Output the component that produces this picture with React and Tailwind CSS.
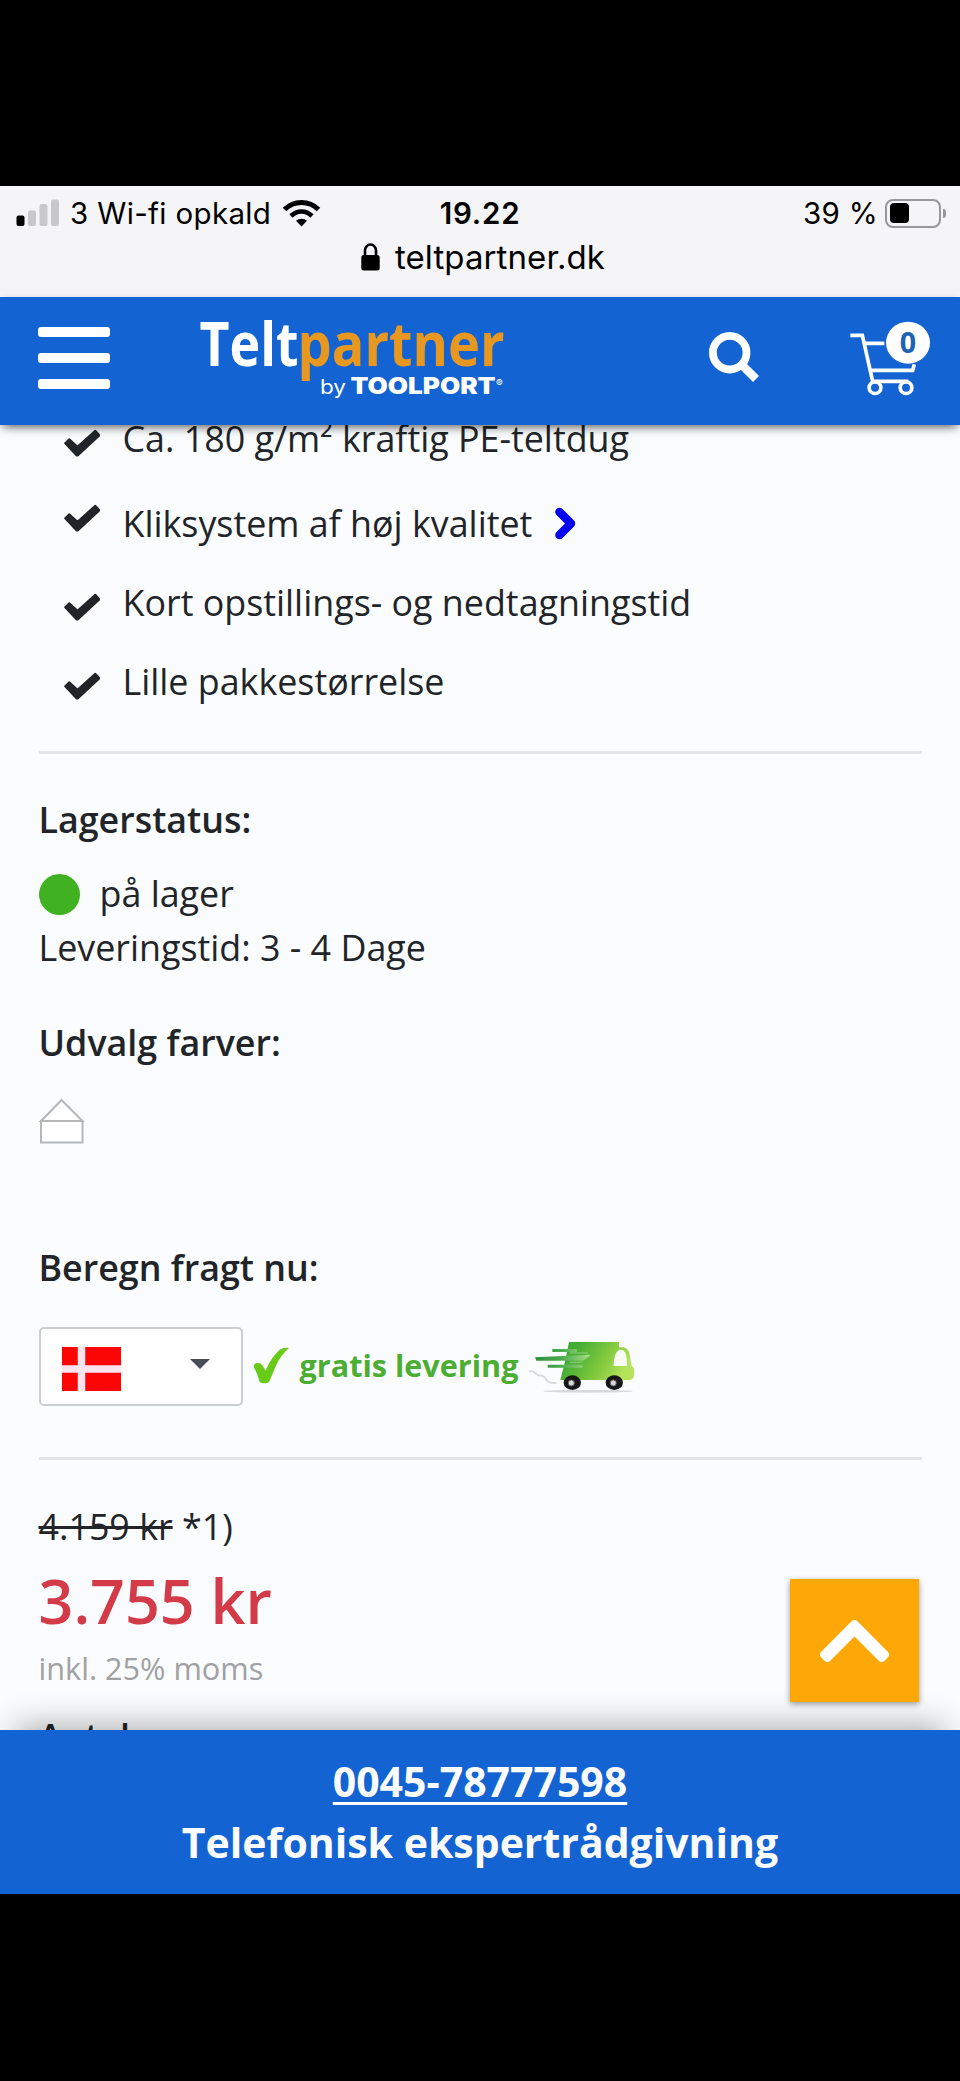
import React from "react";
import { FaChevronUp } from "react-icons/fa";

function StatusBar() {
  return (
    <div className="h-[111px] bg-[#f5f5f7] pt-[7px] font-['Inter',sans-serif] text-black">
      <div className="grid h-10 grid-cols-[1fr_auto_1fr] items-center">
        <div className="flex items-center pl-4">
          <svg width="44" height="28" viewBox="0 0 44 28">
            <rect x="0.5" y="16.5" width="8" height="10.5" rx="2" fill="#000" />
            <rect x="12" y="11.5" width="8" height="15.5" rx="2" fill="#c8c8ca" />
            <rect x="23.5" y="5" width="8" height="22" rx="2" fill="#c8c8ca" />
            <rect x="35" y="0.5" width="8" height="26.5" rx="2" fill="#c8c8ca" />
          </svg>
          <span className="ml-[10px] text-[29.5px] leading-10 tracking-[0.35px] whitespace-nowrap">3 Wi-fi opkald</span>
          <svg className="ml-[11px]" width="39" height="28" viewBox="0 0 39 28" fill="none" stroke="#000">
            <path d="M2.500 10.500 C12 1 27 1 36.500 10.500" strokeWidth="5" />
            <path d="M9 17 C15 11 24 11 30 17" strokeWidth="4.600" />
            <path d="M19.500 27.500 L14 21.800 C17 18.900 22 18.900 25 21.800 Z" fill="#000" stroke="none" />
          </svg>
        </div>
        <span className="text-[29.5px] leading-10 font-semibold tracking-[0.8px]">19.22</span>
        <div className="flex items-center justify-end pr-[14px]">
          <span className="mr-[7px] text-[29.5px] leading-10 tracking-[0.3px]">39 %</span>
          <div className="flex h-[29px] w-[56px] items-center rounded-[8px] border-2 border-[#98989a] pl-[3px]">
            <div className="h-5 w-[19px] rounded-[4px] bg-black" />
          </div>
          <div className="ml-[2px] h-[9px] w-[3px] rounded-r-full bg-[#98989a]" />
        </div>
      </div>
      <div className="mt-1 flex h-10 items-center justify-center pl-[6px]">
        <svg width="19" height="28" viewBox="0 0 19 28">
          <path d="M4 13 V7.500 a5.500 6 0 0 1 11 0 V13" fill="none" stroke="#000" strokeWidth="2.600" />
          <rect x="0.300" y="12" width="18.400" height="15.500" rx="2.500" fill="#000" />
        </svg>
        <span className="ml-[15px] text-[33px] leading-10 tracking-[0.1px]">teltpartner.dk</span>
      </div>
    </div>
  );
}

function Logo() {
  return (
    <svg width="310" height="84" viewBox="0 0 310 84" className="ml-[88px] overflow-visible">
      <g fontFamily="'Open Sans', sans-serif" fontSize="60">
        <text x="1.500" y="48" fontWeight="700" textLength="99" lengthAdjust="spacingAndGlyphs" fill="#fff">Telt</text>
        <text x="99.500" y="48" fontWeight="700" textLength="207" lengthAdjust="spacingAndGlyphs" fill="#e8981f">partner</text>
      </g>
      <text x="122" y="75.500" fontFamily="Inter, sans-serif" fontSize="19.500" fill="#fff" textLength="26" lengthAdjust="spacingAndGlyphs">by</text>
      <text x="152.500" y="75.500" fontFamily="Inter, sans-serif" fontWeight="900" fontSize="22.500" fill="#fff" textLength="145" lengthAdjust="spacingAndGlyphs">TOOLPORT</text>
      <text x="298" y="69" fontFamily="Inter, sans-serif" fontSize="10" fill="#fff">®</text>
    </svg>
  );
}

function Header() {
  return (
    <header className="relative z-10 flex h-32 items-start bg-[#1463d2] pt-[21px] shadow-[0_4px_10px_-3px_rgba(0,0,0,0.75)]">
      <div className="mt-[9px] ml-[38px] flex w-[72px] flex-col gap-4">
        <div className="h-[10px] rounded-[3px] bg-white" />
        <div className="h-[10px] rounded-[3px] bg-white" />
        <div className="h-[10px] rounded-[3px] bg-white" />
      </div>
      <Logo />
      <svg className="mt-[13px] ml-[199px]" width="54" height="54" viewBox="0 0 54 54" fill="none" stroke="#fff">
        <circle cx="22.700" cy="21.700" r="16.800" strokeWidth="7.800" />
        <path d="M34.500 33.500 L49 48" strokeWidth="8.500" />
      </svg>
      <svg className="ml-[86px]" width="86.700" height="80" viewBox="1100 415 260 240" fill="none" stroke="#fff" strokeWidth="11">
        <path d="M1110 467 H1146 L1177 605 H1284" />
        <path d="M1153 491 H1212 M1170 572 H1297 L1302 554" />
        <circle cx="1184" cy="624" r="17.500" />
        <circle cx="1277" cy="624" r="17.500" />
        <ellipse cx="1283" cy="489" rx="66" ry="63" fill="#fff" stroke="none" />
        <text x="1283" y="519" textAnchor="middle" fontFamily="'Open Sans', sans-serif" fontWeight="700" fontSize="86" fill="#1c63b4" stroke="none">0</text>
      </svg>
    </header>
  );
}

function CheckMark({ className }) {
  return (
    <svg className={`h-9 w-9 shrink-0 ${className}`} viewBox="0 0 36 36">
      <path
        d="M1.200 18.300 L5.300 14.300 L13.500 21.700 L31.200 5.700 L35 9.800 L35 10.800 L13.700 30.600 L12.700 30.600 Z"
        fill="#212529"
        stroke="#212529"
        strokeWidth="2"
        strokeLinejoin="round"
      />
    </svg>
  );
}

function Feature({ children, row, icon }) {
  return (
    <li className={`flex items-start pl-[25px] ${row}`}>
      <CheckMark className={icon} />
      <span className="ml-[23px] flex items-center leading-[53px] whitespace-nowrap">{children}</span>
    </li>
  );
}

function Truck() {
  return (
    <svg className="ml-[10px] shrink-0" width="108.300" height="53.300" viewBox="865 65 325 160">
      <defs>
        <linearGradient id="body" x1="0" x2="1" y1="0" y2="0.300">
          <stop offset="0" stopColor="#3aa535" />
          <stop offset="0.250" stopColor="#45ad35" />
          <stop offset="0.700" stopColor="#86cb3e" />
          <stop offset="1" stopColor="#b4e35c" />
        </linearGradient>
        <linearGradient id="speed" x1="0" x2="1" y1="0" y2="0">
          <stop offset="0" stopColor="#2f8f3c" />
          <stop offset="0.450" stopColor="#46a84a" />
          <stop offset="1" stopColor="#a5dc82" />
        </linearGradient>
      </defs>
      <ellipse cx="1045" cy="219" rx="135" ry="4" fill="#d6d8da" />
      <path d="M868 160 q10 -4 18 4 t18 8 t16 12 t30 10" fill="none" stroke="#d9dadb" strokeWidth="6" />
      <path d="M988 71 H1138 V87 H1152 Q1166 90 1170 108 L1176 143 Q1185 148 1184 165 Q1184 185 1170 185 H962 L976 130 Z" fill="url(#body)" />
      <path d="M1122 143 Q1122 104 1138 95 Q1153 90 1159 108 Q1163 125 1162 143 Z" fill="#f8fcf5" />
      <path d="M938 92 H1012 V101 H938 Z M886 117 L1050 109 V114 L1030 127 H890 Z M924 139 H1028 V148 H924 Z" fill="url(#speed)" />
      <path d="M990 104 H1044 M990 132 H1028" stroke="#8fce86" strokeWidth="3" />
      <g fill="#171717">
        <ellipse cx="998" cy="193" rx="26" ry="22" />
        <ellipse cx="1124" cy="193" rx="26" ry="22" />
      </g>
      <g fill="#d9d9d9" stroke="#666" strokeWidth="3">
        <ellipse cx="995" cy="194" rx="9" ry="9" />
        <ellipse cx="1121" cy="194" rx="9" ry="9" />
      </g>
    </svg>
  );
}

export default function App() {
  return (
    <div className="flex h-[2081px] w-[960px] flex-col overflow-hidden bg-black pt-[186px] font-['Open_Sans',sans-serif]">
      <StatusBar />
      <Header />
      <main className="h-[1305px] overflow-hidden bg-[#fbfcfe] px-[38.500px] text-[35.84px] leading-[50px] text-[#212529]">
        <ul className="-mt-[13px]">
          <Feature row="h-[85px]" icon="mt-[13px]">Ca. 180 g/m² kraftig PE-teltdug</Feature>
          <Feature row="h-[79px]" icon="mt-[3px]">
            Kliksystem af høj kvalitet
            <svg className="ml-[22px]" width="22" height="33" viewBox="0 0 22 33">
              <path d="M5.500 5 L17 16.500 L5.500 28" fill="none" stroke="#0404f2" strokeWidth="8.500" strokeLinecap="round" strokeLinejoin="round" />
            </svg>
          </Feature>
          <Feature row="h-[79px]" icon="mt-[13px]">Kort opstillings- og nedtagningstid</Feature>
          <Feature row="h-[95px]" icon="mt-[13px]">Lille pakkestørrelse</Feature>
        </ul>
        <hr className="mt-[0.500px] h-[3px] border-0 bg-[#e4e5e7]" />

        <h2 className="mt-[41.500px] font-semibold">Lagerstatus:</h2>
        <div className="mt-6 flex h-[50px] items-center">
          <div className="h-[41px] w-[41px] rounded-full bg-[#40b120]" />
          <span className="ml-[20px]">på lager</span>
        </div>
        <p className="mt-[4px]">Leveringstid: 3 - 4 Dage</p>

        <h2 className="mt-[45px] font-semibold">Udvalg farver:</h2>
        <svg className="mt-[30px]" width="46" height="47" viewBox="0 0 46 47" fill="#fff" stroke="#b5b6b8" strokeWidth="2">
          <path d="M2 23 L22.500 2 L43.500 23 Z" />
          <rect x="2" y="23" width="41.500" height="21.500" />
        </svg>

        <h2 className="mt-[98px] font-semibold">Beregn fragt nu:</h2>
        <div className="mt-[34px] flex h-[79px] items-center">
          <div className="flex h-[79px] w-[204px] shrink-0 items-center rounded-[5px] border-2 border-[#cccdd3] bg-white pl-[21px]">
            <svg className="mt-1" width="59" height="44" viewBox="0 0 59 44">
              <rect width="59" height="44" fill="#fb0505" />
              <path d="M19.500 0 V44 M0 22 H59" stroke="#fde4ee" strokeWidth="7.500" />
            </svg>
            <svg className="mb-[5px] ml-[69px]" width="20" height="10" viewBox="0 0 20 10">
              <path d="M0 0 H20 L10 10 Z" fill="#494b57" />
            </svg>
          </div>
          <svg className="mb-[2px] ml-[10px] shrink-0" width="37" height="37" viewBox="0 0 37 37">
            <path d="M0.500 20 Q1 16 4.500 16 Q8 15.500 9.500 18.500 L12.500 23.500 Q19 9 27 2.500 Q31 0 36 1 Q28 8 23.500 17.500 L16.500 34 Q15.500 36.500 12 36.300 Q7.500 36.500 6.500 34.500 Q4.500 26 0.500 20 Z" fill="#68cb18" />
          </svg>
          <span className="mb-[3px] ml-[10px] text-[30.600px] leading-[50px] font-bold whitespace-nowrap text-[#4bae33]">gratis levering</span>
          <Truck />
        </div>
        <hr className="mt-[51px] h-[3px] border-0 bg-[#e4e5e7]" />

        <p className="mt-[42px]"><s className="decoration-[3px]">4.159 kr</s> *1)</p>
        <p className="mt-[14px] text-[61px] leading-[70px] font-semibold text-[#d33b49]">3.755 kr</p>
        <p className="mt-[7px] text-[30.700px] leading-[50px] text-[#a0a1a3]">inkl. 25% moms</p>
        <h2 className="mt-[19px] font-semibold">Antal</h2>
      </main>
      <footer className="relative z-10 h-[164px] bg-[#1463d2] pt-[21px] text-center text-[41px] font-bold text-[#fafcff] shadow-[0_-20px_30px_-15px_rgba(0,0,0,0.3)]">
        <p className="leading-[60px]"><a className="underline decoration-[3px] underline-offset-[5px]">0045-78777598</a></p>
        <p className="leading-[62px]">Telefonisk ekspertrådgivning</p>
      </footer>
      <button className="absolute top-[1579px] left-[790px] z-20 flex h-[123px] w-[129px] items-center justify-center bg-[#fda807] shadow-[0_2px_6px_rgba(0,0,0,0.4)]">
        <FaChevronUp className="h-[82px] w-[71px] text-white" />
      </button>
    </div>
  );
}
